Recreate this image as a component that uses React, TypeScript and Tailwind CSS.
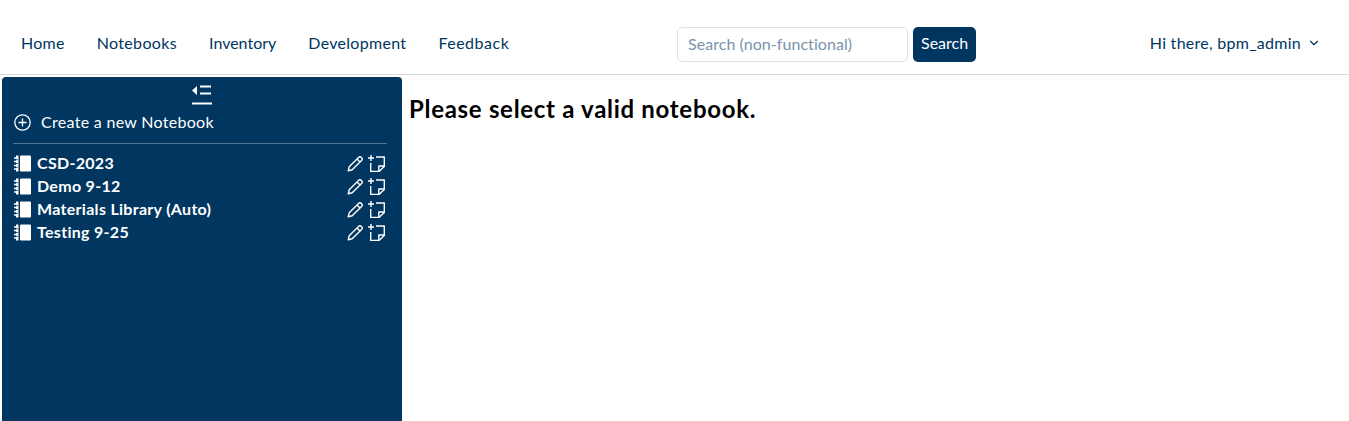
import { ChevronDown } from "lucide-react";

const links = [
  { label: "Home", cls: "tracking-[0.25px]" },
  { label: "Notebooks", cls: "tracking-[0.35px]" },
  { label: "Inventory", cls: "tracking-[0px]" },
  { label: "Development", cls: "tracking-[0.3px]" },
  { label: "Feedback", cls: "tracking-[0.5px]" },
];
const notebooks = ["CSD-2023", "Demo 9-12", "Materials Library (Auto)", "Testing 9-25"];

function CollapseIcon() {
  return (
    <svg width="22" height="21" viewBox="0 0 22 21" fill="none">
      <path d="M1 6.5 6 2v9z" fill="#fff" />
      <path d="M9 2.5h11M9 9.5h11" stroke="#fff" strokeWidth="2" />
      <path d="M1 19.5h20" stroke="#fff" strokeWidth="2" />
    </svg>
  );
}

function PlusCircle() {
  return (
    <svg width="17" height="17" viewBox="0 0 17 17" fill="none" stroke="#fff" strokeWidth="1.3">
      <circle cx="8.5" cy="8.5" r="7.7" />
      <path d="M8.5 4.5v8M4.5 8.5h8" />
    </svg>
  );
}

function NotebookIcon() {
  return (
    <svg className="mt-[2px]" width="17" height="17" viewBox="0 0 17 17" fill="none">
      <rect x="2" y="0.5" width="2.5" height="16" fill="#fff" />
      <rect x="6" y="0.5" width="11" height="16" rx="1" fill="#fff" />
      <path d="M0 3h3M0 6.5h3M0 10.5h3M0 14h3" stroke="#fff" strokeWidth="1.4" />
      <path d="M2 4.7h2M2 8.5h2M2 12.3h2" stroke="#003660" strokeWidth="0.8" />
    </svg>
  );
}

function PencilIcon() {
  return (
    <svg width="16" height="16" viewBox="0 0 16 16" fill="none" stroke="#fff" strokeWidth="1.4" strokeLinejoin="round">
      <path d="M1.2 14.8l1-4L11.8 1.2a1.6 1.6 0 0 1 2.2 0l.8.8a1.6 1.6 0 0 1 0 2.2L5.2 13.8z" />
      <path d="M10 3l3 3" />
    </svg>
  );
}

function NoteAddIcon() {
  return (
    <svg width="18" height="17" viewBox="0 0 18 17" fill="none" stroke="#fff" strokeWidth="1.4">
      <path d="M4 0v6M1 3h6" />
      <path d="M9 2h8.3v9.5L12 16.4H3.7V8" strokeLinejoin="round" />
      <path d="M17.3 11h-5.5v5.4" strokeLinejoin="round" />
    </svg>
  );
}

export default function App() {
  return (
    <div className="h-[421px] overflow-hidden bg-white font-['Lato',sans-serif] text-[16px]">
      <nav className="flex h-[75px] items-center border-b border-[#d8d8d8] pl-[21px] pr-[28px] pt-[12px] text-[#003660]">
        <div className="flex w-[656px] gap-[32px]">
          {links.map((l) => (
            <a key={l.label} className={"leading-6 " + l.cls}>{l.label}</a>
          ))}
        </div>
        <form className="mt-[2px] flex gap-[5px]">
          <input
            placeholder="Search (non-functional)"
            className="h-[35px] w-[231px] rounded-[5px] border border-[#dee2e6] px-[10px] pb-[2px] text-[16px] tracking-[0.05px] placeholder:text-[#7a93ab]"
          />
          <button type="button" className="h-[35px] rounded-[5px] bg-[#003660] px-[8px] pb-[2px] text-white">
            Search
          </button>
        </form>
        <div className="ml-auto flex items-center gap-[6px] tracking-[0.27px]">
          <span>Hi there, bpm_admin</span>
          <ChevronDown size={14} strokeWidth={2} />
        </div>
      </nav>
      <div className="flex pt-[2px]">
        <aside className="ml-[2px] h-[344px] w-[400px] rounded-t-[4px] bg-[#003660] text-white">
          <div className="flex justify-center pt-[7px]">
            <CollapseIcon />
          </div>
          <div className="mt-[5px] ml-[12px] flex items-center gap-[10px] leading-6 tracking-[0.3px]">
            <PlusCircle />
            <span>Create a new Notebook</span>
          </div>
          <div className="ml-[11px] mr-[15px] mt-[9px] border-t border-[#4d7394]" />
          <ul className="mt-[7px] pl-[12px] pr-[16px]">
            {notebooks.map((n) => (
              <li key={n} className="flex h-[23px] items-center">
                <NotebookIcon />
                <span className="ml-[6px] font-bold leading-[23px] tracking-[0.3px]">{n}</span>
                <span className="ml-auto mr-[1px] mt-[2px] flex items-center gap-[4px]">
                  <PencilIcon />
                  <NoteAddIcon />
                </span>
              </li>
            ))}
          </ul>
        </aside>
        <main className="pl-[7px] pt-[18px]">
          <h1 className="text-[24px] font-bold leading-[28px] tracking-[0.7px] text-black">Please select a valid notebook.</h1>
        </main>
      </div>
    </div>
  );
}
